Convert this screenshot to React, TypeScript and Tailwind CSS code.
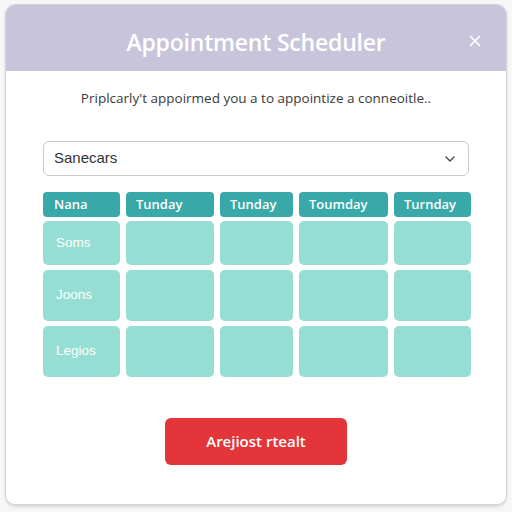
import React from 'react';
import { X, ChevronDown } from 'lucide-react';

const days = ['Tunday', 'Tunday', 'Toumday', 'Turnday'];
const people = [
  { name: 'Soms', h: 'h-[44px]' },
  { name: 'Joons', h: 'h-[51px]' },
  { name: 'Legios', h: 'h-[51px]' },
];

export default function App() {
  return (
    <div className="w-[512px] h-[512px] bg-[#f7f7f8] pt-[4px] px-[5px] font-['Open_Sans',sans-serif]">
      <div className="h-[501px] bg-white rounded-[10px] border border-[#d4d4d8] shadow-[0_2px_3px_rgba(0,0,0,0.12)] overflow-hidden flex flex-col">
        {/* header */}
        <div className="h-[66px] bg-[#c8c4dc] flex items-center justify-center relative shrink-0">
          <h2 className="text-white text-[23px] font-semibold tracking-[-0.2px] mt-[9px]">Appointment Scheduler</h2>
          <button className="absolute right-[22px] top-[27px] text-white">
            <X size={18} strokeWidth={2.2} />
          </button>
        </div>

        <div className="flex flex-col px-[37px]">
          <p className="text-center text-[13.5px] text-[#3a3a3a] mt-[17px] leading-5">
            Priplcarly't appoirmed you a to appointize a conneoitle..
          </p>

          {/* select */}
          <div className="mt-[33px] h-[35px] rounded-[6px] border border-[#c9c9cc] flex items-center justify-between px-[10px]">
            <span className="text-[15px] text-[#333] font-['Liberation_Sans',sans-serif]">Sanecars</span>
            <ChevronDown size={16} className="text-[#444]" strokeWidth={2} />
          </div>

          {/* grid */}
          <div className="mt-[16px] grid grid-cols-[77px_88px_73px_89px_77px] gap-x-[6px]">
            <div className="h-[25px] bg-[#38a8a8] rounded-[4px] flex items-center px-[11px] text-white text-[13px] font-semibold">Nana</div>
            {days.map((d, i) => (
              <div key={i} className="h-[25px] bg-[#38a8a8] rounded-[4px] flex items-center px-[10px] text-white text-[13px] font-semibold">
                {d}
              </div>
            ))}
          </div>
          <div className="mt-[4px] flex flex-col gap-[5px] font-['Liberation_Sans',sans-serif]">
            {people.map((p) => (
              <div key={p.name} className="grid grid-cols-[77px_88px_73px_89px_77px] gap-x-[6px]">
                <div className={`${p.h} bg-[#96ddd3] rounded-[5px] flex items-center px-[13px] text-white text-[13.5px]`}>
                  {p.name}
                </div>
                {days.map((_, i) => (
                  <div key={i} className={`${p.h} bg-[#96ddd3] rounded-[5px]`} />
                ))}
              </div>
            ))}
          </div>

          {/* button */}
          <div className="flex justify-center mt-[41px]">
            <button className="w-[182px] h-[47px] bg-[#e3353a] rounded-[6px] text-white text-[15px] font-semibold">
              Arejiost rtealt
            </button>
          </div>
        </div>
      </div>
    </div>
  );
}
